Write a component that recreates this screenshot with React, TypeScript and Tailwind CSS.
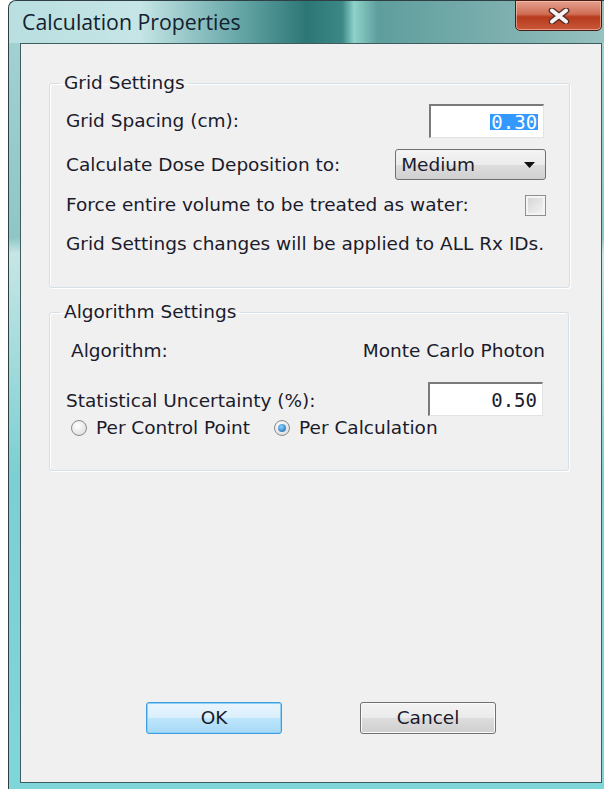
import React from 'react';

const ui = "font-['DejaVu_Sans',Tahoma,sans-serif] text-[18.5px] leading-[22px] text-[#1b1b2b] whitespace-nowrap";

const Radio: React.FC<{ checked?: boolean; label: string }> = ({ checked, label }) => (
  <label className="flex items-center gap-[9px]">
    <span className="w-[16px] h-[16px] rounded-full border border-[#8a8a8a] bg-[radial-gradient(circle_at_40%_35%,#ffffff,#d6d6d6)] flex items-center justify-center">
      {checked && (
        <span className="w-[8px] h-[8px] rounded-full bg-[radial-gradient(circle_at_40%_35%,#8fd3ff,#0b5fa8)]" />
      )}
    </span>
    <span>{label}</span>
  </label>
);

const NumberBox: React.FC<{ value: string; selected?: boolean }> = ({ value, selected }) => (
  <div className="w-[115px] h-[34px] bg-white border-t-2 border-l-2 border-t-[#7a7a7a] border-l-[#7a7a7a] border-r border-b border-r-[#e3e3e3] border-b-[#e3e3e3] flex items-center justify-end pr-[5px] font-['DejaVu_Sans_Mono',monospace] text-[19px]">
    <span className={selected ? 'bg-[#3399ff] text-white px-[1px] leading-[16px]' : 'text-[#1b1b2b]'}>{value}</span>
  </div>
);

const GroupBox: React.FC<{ title: string; className?: string; children: React.ReactNode }> = ({ title, className, children }) => (
  <fieldset className={`border border-[#d5dfe5] rounded-[3px] shadow-[inset_1px_1px_0_#ffffff,1px_1px_0_#ffffff] ${className ?? ''}`}>
    <legend className="-ml-[6px] px-[4px] leading-[18px]">{title}</legend>
    {children}
  </fieldset>
);

export default function App() {
  return (
    <div className="w-[604px] h-[791px] bg-white overflow-hidden">
      <div className="ml-[8px] w-[596px] h-[789px] rounded-tl-[8px] border-l border-t border-[#2f3f44] bg-[linear-gradient(180deg,#a6d3d3_0%,#8ec6c6_30%,#c6e6e4_32%,#7ccfd2_60%,#7fd6d9_100%)] flex flex-col">
        {/* title bar */}
        <div className="h-[42px] shrink-0 flex items-start rounded-tl-[8px] bg-[linear-gradient(90deg,#b9dfe0_0%,#c6e5e6_22%,#6aa9aa_38%,#2c7776_50%,#3b8886_56%,#8fd2c9_58%,#5e9e9d_62%,#7fb1b0_85%,#96c2c0_100%)]">
          <div className="pl-[13px] pt-[7px] font-['Open_Sans',sans-serif] text-[21.3px] leading-[28px] text-[#14212e]">Calculation Properties</div>
          <div className="ml-auto mr-[2px] -mt-px w-[87px] h-[31px] rounded-b-[5px] border border-[#4a1c16] bg-[linear-gradient(180deg,#e3a08d_0%,#d06d55_45%,#b63a1c_55%,#c9583a_100%)] shadow-[inset_0_0_0_1px_rgba(255,210,190,0.55)] flex items-center justify-center">
            <svg width="24" height="16" viewBox="0 0 24 16">
              <path d="M5 2.5 L19 13.5 M19 2.5 L5 13.5" stroke="#5a2a22" strokeWidth="6.5" strokeLinecap="round" />
              <path d="M5 2.5 L19 13.5 M19 2.5 L5 13.5" stroke="#f4f4f4" strokeWidth="4" strokeLinecap="round" />
            </svg>
          </div>
        </div>

        {/* client area */}
        <div className={`ml-[11px] mr-[2px] h-[740px] border border-[#3f5c5e] bg-[#f0f0f0] flex flex-col pl-[28px] pr-[32px] pt-[30px] ${ui}`}>
          <GroupBox title="Grid Settings" className="h-[214px] pl-[16px] pr-[25px]">
            <div className="flex items-center justify-between mt-[12px] h-[34px]">
              <span>Grid Spacing (cm):</span>
              <NumberBox value="0.30" selected />
            </div>
            <div className="flex items-center justify-between mt-[11px] h-[31px]">
              <span>Calculate Dose Deposition to:</span>
              <div className="-mr-[2px] w-[151px] h-[31px] rounded-[3px] border border-[#707070] bg-[linear-gradient(180deg,#f4f4f4_0%,#ebebeb_50%,#dddddd_51%,#d0d0d0_100%)] flex items-center pl-[5px] pr-[10px]">
                <span>Medium</span>
                <svg className="ml-auto" width="11" height="6" viewBox="0 0 11 6">
                  <path d="M0 0 H11 L5.5 6 Z" fill="#111" />
                </svg>
              </div>
            </div>
            <div className="flex items-center justify-between mt-[14px] h-[22px]">
              <span>Force entire volume to be treated as water:</span>
              <span className="-mr-[2px] w-[21px] h-[21px] border border-[#8e8f8f] bg-[linear-gradient(135deg,#d2d2d2,#f6f6f6)] shadow-[inset_0_0_0_2px_#f4f4f4]" />
            </div>
            <div className="mt-[17px]">Grid Settings changes will be applied to ALL Rx IDs.</div>
          </GroupBox>

          <GroupBox title="Algorithm Settings" className="mt-[15px] h-[168px] pl-[16px] pr-[25px]">
            <div className="flex items-center justify-between mt-[19px] pl-[5px] -mr-[2px]">
              <span>Algorithm:</span>
              <span>Monte Carlo Photon</span>
            </div>
            <div className="flex items-center justify-between mt-[20px] h-[34px]">
              <span className="pt-[3px]">Statistical Uncertainty (%):</span>
              <NumberBox value="0.50" />
            </div>
            <div className="flex items-center gap-[24px] pl-[5px] mt-[1px]">
              <Radio label="Per Control Point" />
              <Radio checked label="Per Calculation" />
            </div>
          </GroupBox>

          <div className="mt-auto mb-[48px] flex justify-center gap-[78px] pl-[24px]">
            <button className="w-[136px] h-[32px] rounded-[3px] border border-[#3c9ee0] shadow-[inset_0_0_0_1px_#8fd0f5] bg-[linear-gradient(180deg,#eaf5fd_0%,#d9effc_50%,#bee6fd_51%,#a7d9f5_100%)]">
              OK
            </button>
            <button className="w-[136px] h-[32px] rounded-[3px] border border-[#707070] shadow-[inset_0_0_0_1px_#fbfbfb] bg-[linear-gradient(180deg,#f2f2f2_0%,#ebebeb_50%,#dddddd_51%,#cfcfcf_100%)]">
              Cancel
            </button>
          </div>
        </div>
      </div>
    </div>
  );
}
